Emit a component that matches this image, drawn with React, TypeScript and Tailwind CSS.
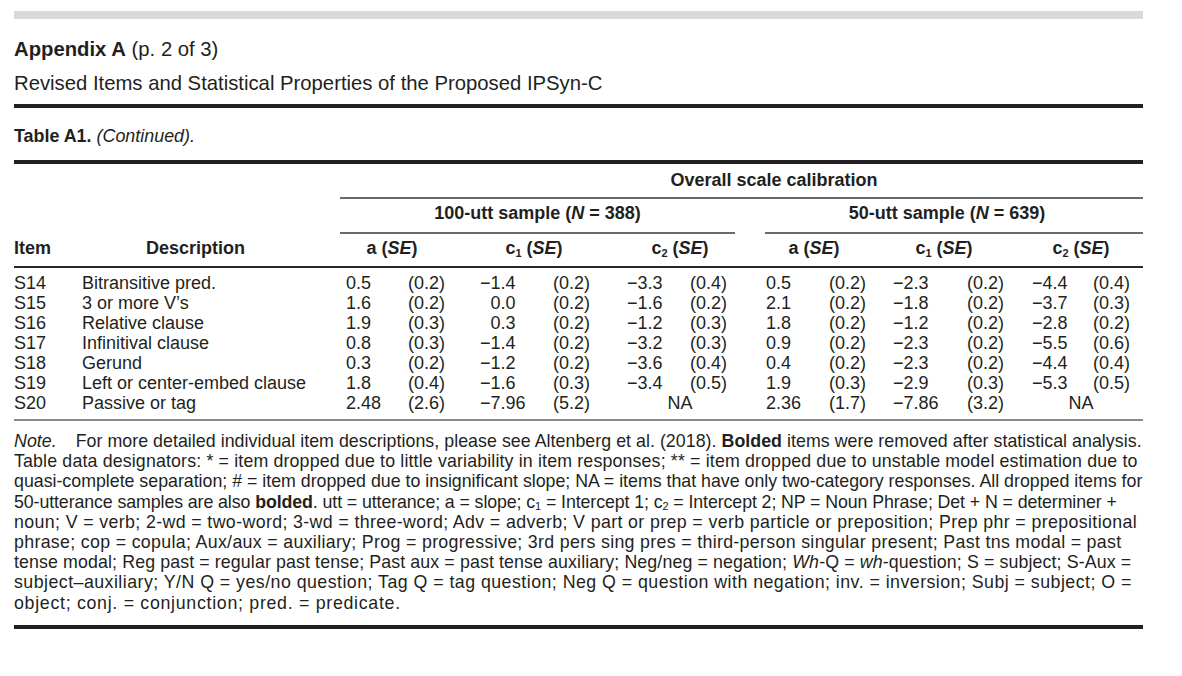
import React from "react";

type Cell = string | { na: true };

const NA: Cell = { na: true };

const rows: Cell[][] = [
  ["S14", "Bitransitive pred.", "0.5", "(0.2)", "−1.4", "(0.2)", "−3.3", "(0.4)", "0.5", "(0.2)", "−2.3", "(0.2)", "−4.4", "(0.4)"],
  ["S15", "3 or more V’s", "1.6", "(0.2)", "0.0", "(0.2)", "−1.6", "(0.2)", "2.1", "(0.2)", "−1.8", "(0.2)", "−3.7", "(0.3)"],
  ["S16", "Relative clause", "1.9", "(0.3)", "0.3", "(0.2)", "−1.2", "(0.3)", "1.8", "(0.2)", "−1.2", "(0.2)", "−2.8", "(0.2)"],
  ["S17", "Infinitival clause", "0.8", "(0.3)", "−1.4", "(0.2)", "−3.2", "(0.3)", "0.9", "(0.2)", "−2.3", "(0.2)", "−5.5", "(0.6)"],
  ["S18", "Gerund", "0.3", "(0.2)", "−1.2", "(0.2)", "−3.6", "(0.4)", "0.4", "(0.2)", "−2.3", "(0.2)", "−4.4", "(0.4)"],
  ["S19", "Left or center-embed clause", "1.8", "(0.4)", "−1.6", "(0.3)", "−3.4", "(0.5)", "1.9", "(0.3)", "−2.9", "(0.3)", "−5.3", "(0.5)"],
  ["S20", "Passive or tag", "2.48", "(2.6)", "−7.96", "(5.2)", NA, "2.36", "(1.7)", "−7.86", "(3.2)", NA],
];

const gridCols =
  "grid grid-cols-[68px_264px_62px_72px_73px_74px_63px_76px_63px_64px_74px_65px_61px_50px]";

function Num({ v, pad }: { v: string; pad?: boolean }) {
  if (pad && !v.startsWith("−")) {
    return (
      <span>
        <span className="invisible">−</span>
        {v}
      </span>
    );
  }
  return <span>{v}</span>;
}

function DataRow({ cells }: { cells: Cell[] }) {
  const out: React.ReactNode[] = [];
  let naCount = 0;
  cells.forEach((c, i) => {
    if (typeof c !== "string") {
      naCount += 1;
      out.push(
        <div
          key={i}
          className={
            naCount === 1
              ? "col-span-2 text-center pr-[33px]"
              : "col-span-2 text-center pr-[13px]"
          }
        >
          NA
        </div>
      );
    } else {
      out.push(
        <div key={i} className="whitespace-nowrap">
          <Num v={c} pad={i === 4} />
        </div>
      );
    }
  });
  return <div className={`${gridCols} h-[20px] leading-[20px]`}>{out}</div>;
}

function HeadLabel({ sym, sub }: { sym: string; sub?: string }) {
  return (
    <span>
      {sym}
      {sub ? <sub className="text-[11px] -bottom-[3px]">{sub}</sub> : null} (<i>SE</i>)
    </span>
  );
}

export default function App() {
  return (
    <div className="w-[1182px] h-[676px] bg-white text-[#231f20] font-['Liberation_Sans',Arial,Helvetica,sans-serif] overflow-hidden">
      <div className="ml-[14px] w-[1129px] pt-[11px]">
        <div className="h-[8px] bg-[#d9d9d9]" />
        <div className="mt-[18px] text-[20.3px] leading-[24px]">
          <b>Appendix A</b> (p. 2 of 3)
        </div>
        <div className="mt-[10px] text-[20.3px] leading-[24px]">
          Revised Items and Statistical Properties of the Proposed IPSyn-C
        </div>
        <div className="mt-[9px] h-[4px] bg-[#231f20]" />
        <div className="mt-[18px] text-[17.9px] leading-[21px]">
          <b>Table A1.</b> <i>(Continued).</i>
        </div>
        <div className="mt-[13px] h-[4px] bg-[#231f20]" />

        {/* table */}
        <div className="text-[18px]">
          {/* Overall row */}
          <div className="grid grid-cols-[326px_803px] h-[35px]">
            <div />
            <div className="border-b-2 border-[#6a6a6a] flex items-center justify-center pl-[65px] font-bold">
              Overall scale calibration
            </div>
          </div>
          {/* Group row */}
          <div className="grid grid-cols-[326px_395px_30px_378px] h-[35px]">
            <div />
            <div className="border-b-2 border-[#6a6a6a] flex items-center justify-center pb-[5px] font-bold">
              <span>
                100-utt sample (<i>N</i> = 388)
              </span>
            </div>
            <div />
            <div className="border-b-2 border-[#6a6a6a] flex items-center justify-center pb-[5px] pr-[14px] font-bold">
              <span>
                50-utt sample (<i>N</i> = 639)
              </span>
            </div>
          </div>
          {/* Header row */}
          <div className={`${gridCols} h-[34px] border-b-2 border-[#2a2a2a] font-bold`}>
            <div className="flex items-center pb-[4px]">Item</div>
            <div className="flex items-center pb-[4px] pl-[64px]">Description</div>
            <div className="col-span-2 flex items-center justify-center pb-[4px] pr-[42px]">
              <HeadLabel sym="a" />
            </div>
            <div className="col-span-2 flex items-center justify-center pb-[4px] pr-[39px]">
              <HeadLabel sym="c" sub="1" />
            </div>
            <div className="col-span-2 flex items-center justify-center pb-[4px] pr-[33px]">
              <HeadLabel sym="c" sub="2" />
            </div>
            <div className="col-span-2 flex items-center justify-center pb-[4px] pr-[31px]">
              <HeadLabel sym="a" />
            </div>
            <div className="col-span-2 flex items-center justify-center pb-[4px] pr-[37px]">
              <HeadLabel sym="c" sub="1" />
            </div>
            <div className="col-span-2 flex items-center justify-center pb-[4px] pr-[13px]">
              <HeadLabel sym="c" sub="2" />
            </div>
          </div>
          {/* Data rows */}
          <div className="pt-[5px] pb-[6px] border-b-2 border-[#8a8a8a]">
            {rows.map((r, i) => (
              <DataRow key={i} cells={r} />
            ))}
          </div>
        </div>

        {/* Note */}
        <div className="pt-[10px] text-[17.8px] leading-[20.2px] whitespace-nowrap">
          <div className="tracking-[0.04px]">
            <i>Note.</i>
            <span className="inline-block w-[14px]" /> For more detailed individual item descriptions, please see Altenberg et al. (2018).{" "}
            <b>Bolded</b> items were removed after statistical analysis.
          </div>
          <div className="tracking-[0.15px]">
            Table data designators: * = item dropped due to little variability in item responses; ** = item dropped due to unstable model estimation due to
          </div>
          <div className="tracking-[-0.01px]">
            quasi-complete separation; # = item dropped due to insignificant slope; NA = items that have only two-category responses. All dropped items for
          </div>
          <div className="tracking-[-0.1px]">
            50-utterance samples are also <b>bolded</b>. utt = utterance; a = slope; c<sub className="text-[11px]">1</sub> = Intercept 1; c
            <sub className="text-[11px]">2</sub> = Intercept 2; NP = Noun Phrase; Det + N = determiner +
          </div>
          <div className="tracking-[0.37px]">
            noun; V = verb; 2-wd = two-word; 3-wd = three-word; Adv = adverb; V part or prep = verb particle or preposition; Prep phr = prepositional
          </div>
          <div className="tracking-[0.32px]">
            phrase; cop = copula; Aux/aux = auxiliary; Prog = progressive; 3rd pers sing pres = third-person singular present; Past tns modal = past
          </div>
          <div className="tracking-[0.11px]">
            tense modal; Reg past = regular past tense; Past aux = past tense auxiliary; Neg/neg = negation; <i>Wh</i>-Q = <i>wh</i>-question; S = subject; S-Aux =
          </div>
          <div className="tracking-[0.46px]">
            subject–auxiliary; Y/N Q = yes/no question; Tag Q = tag question; Neg Q = question with negation; inv. = inversion; Subj = subject; O =
          </div>
          <div className="tracking-[0.7px]">object; conj. = conjunction; pred. = predicate.</div>
        </div>
        <div className="mt-[12px] h-[4px] bg-[#231f20]" />
      </div>
    </div>
  );
}
